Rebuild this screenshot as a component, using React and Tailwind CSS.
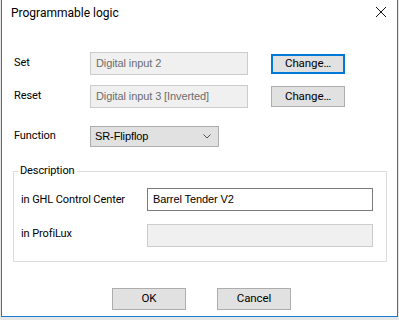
import React from 'react';

const ui = { fontFamily: 'Roboto, "Segoe UI", sans-serif' };
const box = { fontFamily: '"Liberation Sans", Tahoma, sans-serif' };

const Field = ({ value, disabled, className }) => (
  <div
    style={box}
    className={`h-[23px] flex items-center px-[5px] text-[11px] border ${
      disabled ? 'bg-[#f0f0f0] border-[#cccccc] text-[#6d6d6d]' : 'bg-white border-[#7a7a7a] text-black'
    } ${className}`}
  >
    {value}
  </div>
);

const Button = ({ children, focused, className = '' }) => (
  <button
    style={ui}
    className={`w-[74px] flex items-center justify-center text-[11.5px] text-black bg-[#e1e1e1] ${
      focused ? 'border-2 border-[#0078d7]' : 'border border-[#adadad]'
    } ${className}`}
  >
    {children}
  </button>
);

export default function App() {
  return (
    <div className="w-[399px] h-[320px] bg-[#e6e6e6] overflow-hidden">
      <div
        style={ui}
        className="ml-[1px] w-[397px] h-[317px] bg-white border-x border-b border-[#1a7ad4] text-[11px] tracking-[-0.1px] text-black"
      >
        {/* title bar */}
        <div className="h-[30px] flex items-center justify-between pl-[9px] pr-[10px]">
          <span className="text-[12px] tracking-normal -mt-[4px]">Programmable logic</span>
          <svg width="12" height="12" viewBox="0 0 12 12" className="-mt-[6px]">
            <path d="M1 1 L11 11 M11 1 L1 11" stroke="#111" strokeWidth="1" />
          </svg>
        </div>

        <div className="pl-[12px]">
          <div className="mt-[22px] flex items-center">
            <span className="w-[76px]">Set</span>
            <Field value="Digital input 2" disabled className="w-[158px]" />
            <Button focused className="ml-[23px] h-[20px] mt-[1px]">Change…</Button>
          </div>

          <div className="mt-[10px] flex items-center">
            <span className="w-[76px]">Reset</span>
            <Field value="Digital input 3 [Inverted]" disabled className="w-[158px]" />
            <Button className="ml-[23px] h-[21px]">Change…</Button>
          </div>

          <div className="mt-[18px] flex items-center">
            <span className="w-[76px]">Function</span>
            <div className="w-[129px] h-[21px] flex items-center justify-between pl-[4px] pr-[7px] bg-[#e1e1e1] border border-[#adadad]">
              <span style={box} className="text-[11px]">SR-Flipflop</span>
              <svg width="8" height="5" viewBox="0 0 8 5">
                <path d="M0.5 0.5 L4 4 L7.5 0.5" stroke="#555" strokeWidth="1" fill="none" />
              </svg>
            </div>
          </div>
        </div>

        <fieldset className="ml-[11px] mt-[16px] w-[374px] border border-[#dcdcdc] pl-[7px] pr-[13px] pb-[14px]">
          <legend className="-ml-[3px] px-[2px] leading-[16px]">Description</legend>
          <div className="mt-[9px] flex items-center">
            <span className="w-[126px] mt-[1px]">in GHL Control Center</span>
            <Field value="Barrel Tender V2" className="flex-1" />
          </div>
          <div className="mt-[13px] flex items-center">
            <span className="w-[126px] -mt-[2px]">in ProfiLux</span>
            <Field value="" disabled className="flex-1" />
          </div>
        </fieldset>

        <div className="mt-[26px] ml-[110px] flex gap-[31px]">
          <Button className="h-[22px]">OK</Button>
          <Button className="h-[22px]">Cancel</Button>
        </div>
      </div>
    </div>
  );
}
